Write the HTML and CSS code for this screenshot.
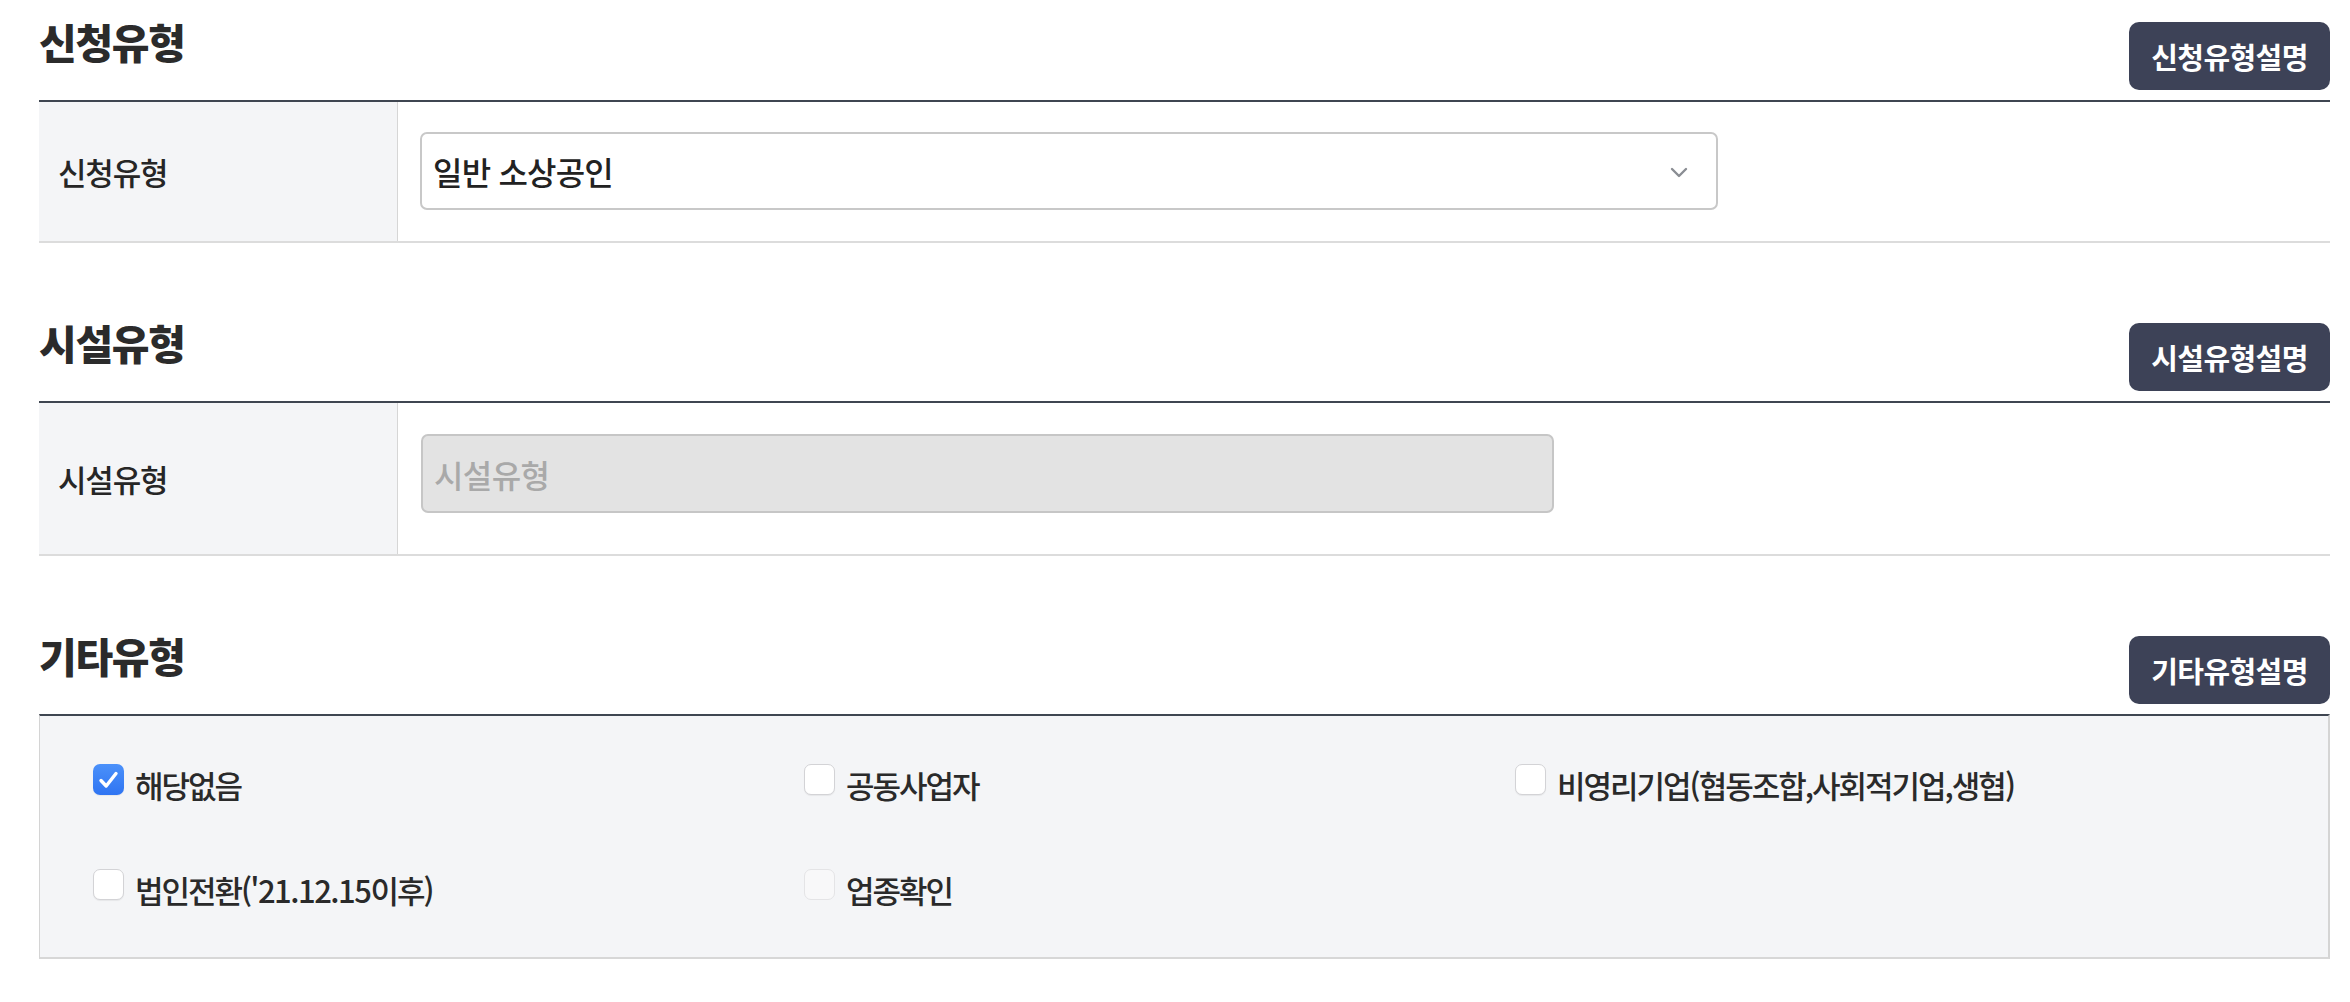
FILE: index.html
```html
<!DOCTYPE html>
<html lang="ko">
<head>
<meta charset="utf-8">
<title>유형 선택</title>
<link rel="stylesheet" href="styles.css">
</head>
<body>
<main class="page">
  <section class="section">
    <div class="section-head">
      <h2 class="section-title">신청유형</h2>
      <button type="button" class="help-btn">신청유형설명</button>
    </div>
    <div class="form-table">
      <div class="form-row row-apply">
        <div class="form-label">신청유형</div>
        <div class="form-field">
          <div class="select-box">
            <span class="select-value">일반 소상공인</span>
            <svg class="chevron" width="18" height="11" viewBox="0 0 18 11" aria-hidden="true"><path d="M2 2 L9 9 L16 2" fill="none" stroke="#8a8d93" stroke-width="2.4" stroke-linecap="round" stroke-linejoin="round"/></svg>
          </div>
        </div>
      </div>
    </div>
  </section>

  <section class="section">
    <div class="section-head">
      <h2 class="section-title">시설유형</h2>
      <button type="button" class="help-btn">시설유형설명</button>
    </div>
    <div class="form-table">
      <div class="form-row row-facility">
        <div class="form-label">시설유형</div>
        <div class="form-field">
          <input class="text-input" type="text" placeholder="시설유형" disabled>
        </div>
      </div>
    </div>
  </section>

  <section class="section">
    <div class="section-head">
      <h2 class="section-title">기타유형</h2>
      <button type="button" class="help-btn">기타유형설명</button>
    </div>
    <div class="check-panel">
      <label class="check-item">
        <span class="check-box is-checked"><svg width="31" height="31" viewBox="0 0 31 31" aria-hidden="true"><path d="M8 16.5 L13.2 22 L23 9.5" fill="none" stroke="#fff" stroke-width="3.4" stroke-linecap="round" stroke-linejoin="round"/></svg></span>
        <span class="check-text">해당없음</span>
      </label>
      <label class="check-item">
        <span class="check-box"></span>
        <span class="check-text">공동사업자</span>
      </label>
      <label class="check-item">
        <span class="check-box"></span>
        <span class="check-text">비영리기업(협동조합,사회적기업,생협)</span>
      </label>
      <label class="check-item">
        <span class="check-box"></span>
        <span class="check-text">법인전환(<span class="num">'21.12.15</span>이후)</span>
      </label>
      <label class="check-item">
        <span class="check-box is-disabled"></span>
        <span class="check-text">업종확인</span>
      </label>
    </div>
  </section>
</main>
</body>
</html>
```

FILE: styles.css
```css
* {
  box-sizing: border-box;
}

html, body {
  margin: 0;
  padding: 0;
  background: #ffffff;
}

body {
  font-family: "Noto Sans CJK KR", "Noto Sans", sans-serif;
  color: #2a2a2a;
}

.page {
  padding: 22px 20px 0 39px;
}

.section {
  margin-bottom: 80px;
}

.section-head {
  display: flex;
  justify-content: space-between;
  align-items: flex-start;
  margin-bottom: 10px;
}

.section-title {
  margin: 0;
  font-size: 41px;
  line-height: 38px;
  font-weight: 900;
  letter-spacing: -1.3px;
  color: #2b2b2b;
}

.help-btn {
  height: 68px;
  width: 201px;
  padding: 0;
  border: none;
  border-radius: 10px;
  background: #3d4257;
  color: #ffffff;
  font-family: "Noto Sans CJK KR", "Noto Sans", sans-serif;
  font-size: 29px;
  font-weight: 700;
  letter-spacing: -0.6px;
}

.form-table {
  border-top: 2px solid #3f4651;
}

.form-row {
  display: flex;
  border-bottom: 2px solid #dcdcdc;
}

.form-label {
  width: 359px;
  flex: none;
  display: flex;
  align-items: center;
  padding-left: 19px;
  background: #f4f5f7;
  border-right: 1px solid #d6d6d6;
  font-size: 31px;
  font-weight: 500;
  letter-spacing: -1.2px;
  color: #262626;
}

.form-field {
  flex: 1;
  padding-left: 22px;
}

.row-apply .form-field {
  padding-top: 30px;
  padding-bottom: 31px;
}

.row-facility .form-field {
  padding-top: 31px;
  padding-bottom: 41px;
}

.select-box {
  width: 1298px;
  height: 78px;
  display: flex;
  align-items: center;
  justify-content: space-between;
  padding: 0 28px 0 11px;
  border: 2px solid #c8c8c8;
  border-radius: 7px;
  background: #ffffff;
}

.select-value {
  font-size: 32px;
  font-weight: 500;
  letter-spacing: -0.8px;
  color: #222222;
}

.chevron {
  display: block;
  margin-top: 3px;
}

.text-input {
  display: block;
  width: 1133px;
  height: 79px;
  margin-left: 1px;
  padding: 0 11px;
  border: 2px solid #c6c6c6;
  border-radius: 7px;
  background: #e3e3e3;
  font-family: "Noto Sans CJK KR", "Noto Sans", sans-serif;
  font-size: 32px;
  font-weight: 500;
  letter-spacing: -0.6px;
}

.text-input::placeholder {
  color: #a9a9a9;
  opacity: 1;
}

.check-panel {
  display: grid;
  grid-template-columns: repeat(3, 711px);
  row-gap: 65px;
  padding: 48px 0 48px 53px;
  background: #f4f5f7;
  border-top: 2px solid #3f4651;
  border-left: 1px solid #d4d4d4;
  border-right: 2px solid #d4d4d4;
  border-bottom: 2px solid #d7d7d7;
}

.check-item {
  display: flex;
  align-items: flex-start;
  gap: 11px;
  height: 40px;
}

.check-box {
  width: 31px;
  height: 31px;
  flex: none;
  border-radius: 7px;
  background: #ffffff;
  border: 1px solid #d3d3d6;
  box-shadow: 0 1px 1px rgba(0, 0, 0, 0.06);
}

.check-box svg {
  display: block;
}

.check-box.is-checked {
  border: none;
  background: linear-gradient(#4b91fa, #2f74f2);
}

.check-box.is-disabled {
  background: #f8f8f9;
  border-color: #e4e4e6;
  box-shadow: none;
}

.check-text {
  font-size: 31px;
  line-height: 42px;
  font-weight: 500;
  letter-spacing: -2px;
  color: #2a2a2a;
}

.check-text .num {
  letter-spacing: -1.5px;
}
```
